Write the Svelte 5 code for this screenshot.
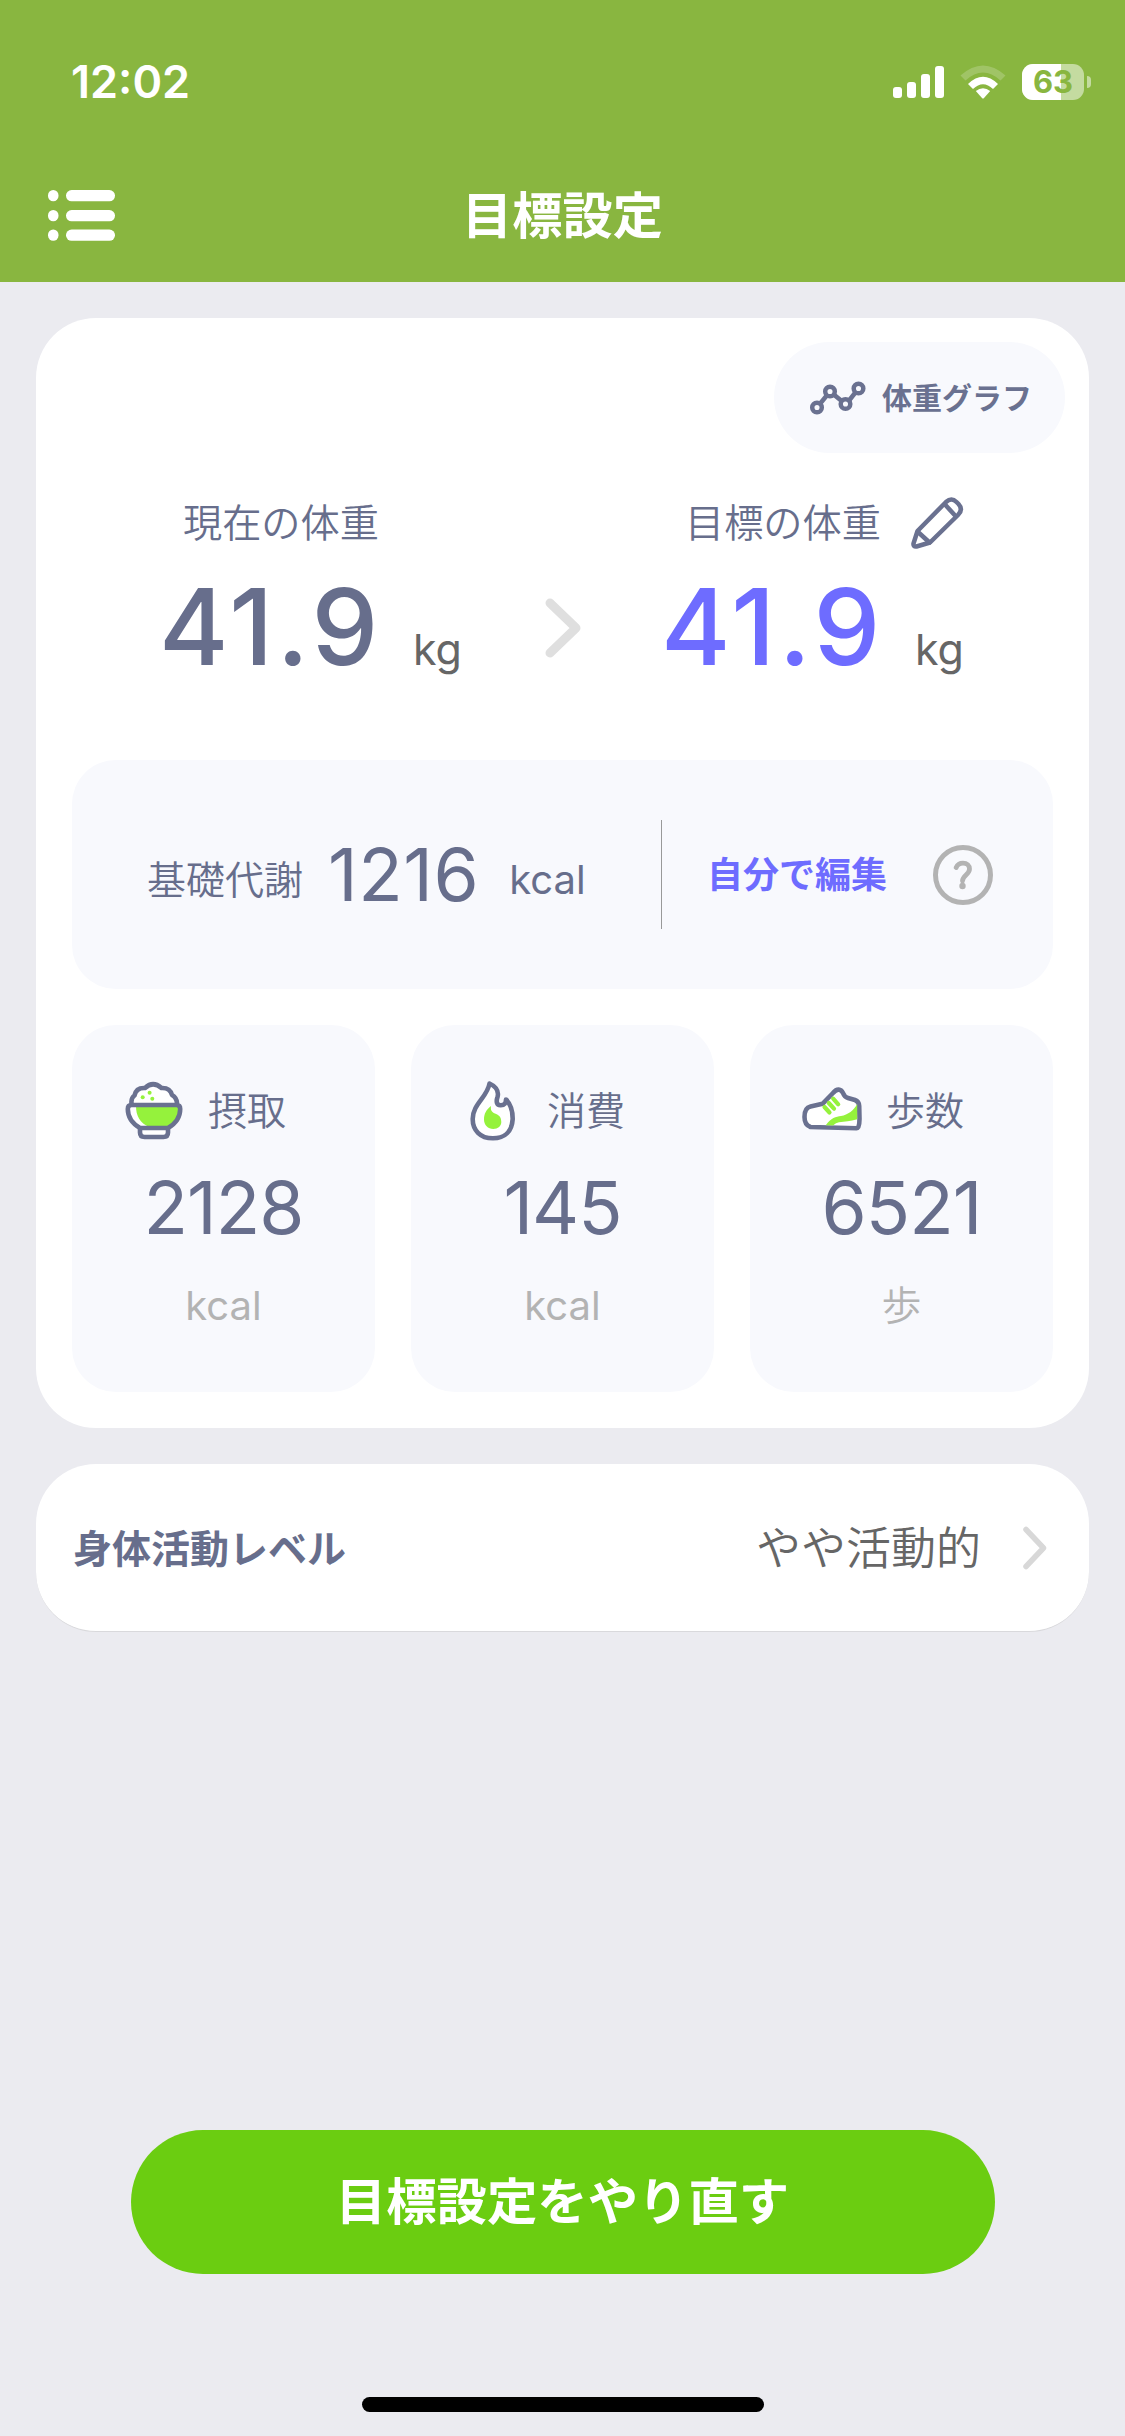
<script>
	const bars = [11, 16, 24, 32];
	const battery = 63;

	const weights = [
		{ label: '現在の体重', value: '41.9', editable: false },
		{ label: '目標の体重', value: '41.9', editable: true }
	];

	const stats = [
		{ icon: 'bowl', label: '摂取', value: 2128, unit: 'kcal' },
		{ icon: 'flame', label: '消費', value: 145, unit: 'kcal' },
		{ icon: 'shoe', label: '歩数', value: 6521, unit: '歩' }
	];
</script>

<div class="screen">
	<header>
		<div class="status">
			<span class="time">12:02</span>
			<div class="indicators">
				<div class="signal">
					{#each bars as height}
						<i style="height: {height}px"></i>
					{/each}
				</div>
				<svg class="wifi" width="46" height="34" viewBox="0 0 46 34">
					<path d="M0.5 10.5Q23-9.5 45.5 10.5L40.5 15.5Q23-0.5 5.5 15.5Z" fill="#fff" opacity="0.2" />
					<path d="M8 19Q23 4.500 38 19L33 24Q23 14.500 13 24Z" fill="#fff" />
					<path d="M15.800 26Q23 20.500 30.200 26L24 33Q23 34 22 33Z" fill="#fff" />
				</svg>
				<div class="battery">
					<div class="cell">
						<div class="level" style="width: {battery}%"></div>
						<span>{battery}</span>
					</div>
					<i class="nub"></i>
				</div>
			</div>
		</div>
		<div class="nav">
			<svg class="menu" width="67" height="52" viewBox="0 0 67 52" fill="#fff">
				{#each [0, 20, 39.500] as y}
					<rect x="0" {y} width="10.500" height="11.300" rx="5.200" />
					<rect x="18" {y} width="49" height="11.300" rx="5.600" />
				{/each}
			</svg>
			<h1>目標設定</h1>
		</div>
	</header>

	<main>
		<section class="card">
			<button class="graph">
				<svg width="58" height="36" viewBox="0 0 58 36" fill="none" stroke="#6a7190">
					<path d="M8 27.500L21 11.500L37 24.500L49.500 8.500" stroke-width="4.500" />
					<g stroke-width="4.500" fill="#f8f9fd">
						<circle cx="8" cy="27.500" r="4.800" />
						<circle cx="21" cy="11.500" r="4.800" />
						<circle cx="36.500" cy="24" r="4.800" />
						<circle cx="49.500" cy="8.500" r="4.800" />
					</g>
				</svg>
				体重グラフ
			</button>

			<div class="weights">
				{#each weights as weight, i}
					{#if i > 0}
						<svg class="arrow" width="36" height="60" viewBox="0 0 36 60">
							<path
								d="M5 5L31 30L5 55"
								fill="none"
								stroke="#dfdfdf"
								stroke-width="9"
								stroke-linecap="round"
								stroke-linejoin="round"
							/>
						</svg>
					{/if}
					<div class="weight" class:target={weight.editable}>
						<div class="weight-label">
							{weight.label}
							{#if weight.editable}
								<svg
									width="54"
									height="54"
									viewBox="0 0 54 54"
									fill="none"
									stroke="#6a7190"
									stroke-width="4.500"
									stroke-linecap="round"
									stroke-linejoin="round"
								>
									<path
										d="M7.500 35L36 6Q41.500 1 46.500 6L48.500 8Q53.500 13.500 48 19L20 46.500L6.500 50.500Q3 51 3.500 47.500Z"
									/>
									<path d="M35 8.500L45.500 20M8 36L19.500 46.500" />
								</svg>
							{/if}
						</div>
						<div class="weight-value">
							<strong>{weight.value}</strong>
							<span>kg</span>
						</div>
					</div>
				{/each}
			</div>

			<div class="metabolism">
				<div class="bmr">
					<span class="bmr-label">基礎代謝</span>
					<span class="number">1216</span>
					<span class="bmr-unit">kcal</span>
				</div>
				<div class="divider"></div>
				<button class="edit">自分で編集</button>
				<svg class="help" width="60" height="60" viewBox="0 0 60 60" fill="none" stroke="#b3b3b3">
					<circle cx="30" cy="30" r="27.500" stroke-width="5" />
					<path
						d="M23.200 22.500C24.500 19.500 27 18.200 30 18.200C34 18.200 36.500 20.500 36.500 24C36.500 29.500 29.500 30.500 29.500 36"
						stroke-width="4.800"
						stroke-linecap="round"
					/>
					<circle cx="29.500" cy="41" r="3.200" fill="#b3b3b3" stroke="none" />
				</svg>
			</div>

			<div class="stats">
				{#each stats as stat}
					<div class="stat">
						<div class="stat-head">
							<svg
								width="60"
								height="60"
								viewBox="0 0 60 60"
								fill="none"
								stroke="#6a7190"
								stroke-width="4.600"
								stroke-linecap="round"
								stroke-linejoin="round"
							>
								{#if stat.icon === 'bowl'}
									<path
										d="M7.500 22Q7 17 10.500 14.500Q12 6.500 21 7Q29-0.500 37.500 7Q46 6.500 48 14Q52.500 16.500 53 22"
										fill="#fff"
									/>
									<path d="M16 48V51.500Q16 56 20.500 56H39.500Q44 56 44 51.500V48" fill="#fff" />
									<path
										d="M3.800 28Q3.800 24 7.500 24H52.500Q56.200 24 56.200 28C56.200 37 50 43.500 44 47H16C10 43.500 3.800 37 3.800 28Z"
										fill="#fff"
										stroke="none"
									/>
									<path
										d="M12 25H56C57 36 50 43 44 46H25C16 42 12 35 12 25Z"
										fill="#95f23c"
										stroke="none"
									/>
									<path
										d="M3.800 28Q3.800 24 7.500 24H52.500Q56.200 24 56.200 28C56.200 37 50 43.500 44 47H16C10 43.500 3.800 37 3.800 28Z"
									/>
									<g fill="#95f23c" stroke="none">
										<circle cx="25.600" cy="11.800" r="2" />
										<circle cx="18.700" cy="16.300" r="2" />
										<circle cx="28.300" cy="17.700" r="2" />
									</g>
								{:else if stat.icon === 'flame'}
									<path
										d="M26.500 2.500C31 4.500 36.500 9 34.500 16C33 20.500 33.500 24 37.500 24.300C41.500 24.500 43 22 43 18.500C47.500 23 49.700 31 49.700 38C49 50 42 57.300 30 57.300C17 57.300 9.700 49 9.700 38C9.700 23 24.500 16 26.500 2.500Z"
										fill="#fff"
									/>
									<path
										d="M28 25C23 29 21 33 21 38.500C21 44 25 48 30.300 48C35 48 38.300 45 38.300 41C38.300 35 35 34 32 32.500C28.500 31 27.500 29 28 25Z"
										fill="#95f23c"
										stroke="none"
									/>
								{:else}
									<path
										d="M2.500 36C2.500 30 4.500 26.500 8.500 25.600L20.500 22.800L31 12C35 7 39 8 41 12Q42.500 16 46 17L53 19Q57 20.500 57.200 25L57.500 38Q57.500 47.200 54.500 47.200L8.500 46Q2.500 44 2.500 36Z"
										fill="#fff"
									/>
									<path
										d="M23.800 44.300C29 37 34 35.500 39 35C46 34 52 29 55.200 23V38.300C48 40.500 43 40.500 37 41.200Q34 41.500 31 44.500Z"
										fill="#95f23c"
										stroke="none"
									/>
									<path
										d="M22.500 26L27.500 31.500M26.800 22L32 27.700M31.200 17.700L36.200 23.300"
										stroke="#95f23c"
										stroke-width="4.200"
									/>
								{/if}
							</svg>
							{stat.label}
						</div>
						<div class="number">{stat.value}</div>
						<div class="stat-unit" class:latin={stat.unit === 'kcal'}>{stat.unit}</div>
					</div>
				{/each}
			</div>
		</section>

		<section class="activity">
			<h2>身体活動レベル</h2>
			<span>やや活動的</span>
			<svg width="24" height="44" viewBox="0 0 24 44">
				<path
					d="M3 3.500L20.500 22L3 40.500"
					fill="none"
					stroke="#d8d8d8"
					stroke-width="5.500"
					stroke-linecap="round"
					stroke-linejoin="round"
				/>
			</svg>
		</section>
	</main>

	<footer>
		<button class="reset">目標設定をやり直す</button>
		<div class="home"></div>
	</footer>
</div>

<style>
	:global(body) {
		margin: 0;
		background: #ebebf0;
	}

	.screen {
		display: flex;
		flex-direction: column;
		width: 1125px;
		height: 2436px;
		box-sizing: border-box;
		background: #ebebf0;
		color: #676e8c;
		font-family: Inter, 'Noto Sans CJK JP', sans-serif;
		font-size: 39px;
		font-weight: 350;
		line-height: 1.2;
	}

	h1,
	h2 {
		margin: 0;
	}

	button {
		padding: 0;
		border: 0;
		font: inherit;
		color: inherit;
	}

	header {
		height: 282px;
		background: #89b640;
		color: #fff;
	}

	.status {
		display: flex;
		align-items: center;
		justify-content: space-between;
		box-sizing: border-box;
		height: 150px;
		padding: 14px 34px 0 71px;
	}

	.time {
		font-size: 45px;
		font-weight: 600;
	}

	.indicators {
		display: flex;
		align-items: center;
		gap: 16px;
	}

	.signal {
		display: flex;
		align-items: flex-end;
		gap: 5px;
	}

	.signal i {
		width: 9px;
		border-radius: 3px;
		background: #fff;
	}

	.battery {
		display: flex;
		align-items: center;
		gap: 3px;
	}

	.cell {
		display: grid;
		width: 62px;
		height: 36px;
		overflow: hidden;
		border-radius: 11px;
		background: rgba(255, 255, 255, 0.5);
	}

	.level,
	.cell span {
		grid-area: 1 / 1;
	}

	.level {
		background: #fff;
	}

	.cell span {
		color: #89b640;
		font-size: 31px;
		font-weight: 700;
		line-height: 36px;
		text-align: center;
	}

	.nub {
		width: 4px;
		height: 12px;
		border-radius: 0 4px 4px 0;
		background: rgba(255, 255, 255, 0.5);
	}

	.nav {
		display: grid;
		grid-template-columns: 1fr auto 1fr;
		align-items: center;
		height: 132px;
		padding: 0 48px;
	}

	h1 {
		font-size: 50.2px;
		font-weight: 700;
		line-height: 60px;
	}

	main {
		display: flex;
		flex-direction: column;
		flex: 1;
		gap: 36px;
		padding: 36px;
	}

	.card {
		display: flex;
		flex-direction: column;
		box-sizing: border-box;
		height: 1110px;
		padding: 24px 36px 36px;
		border-radius: 60px;
		background: #fff;
	}

	.graph {
		display: flex;
		align-items: center;
		align-self: flex-end;
		gap: 15px;
		box-sizing: border-box;
		width: 291px;
		height: 111px;
		margin-right: -12px;
		padding-left: 35px;
		border-radius: 56px;
		background: #f8f9fd;
		color: #6a7190;
		font-size: 30px;
		font-weight: 700;
	}

	.weights {
		display: flex;
		flex: none;
		height: 221px;
		margin: 43px 0;
		padding-left: 90px;
	}

	.weight {
		width: 382px;
	}

	.weight-label {
		display: flex;
		align-items: center;
		gap: 29px;
		height: 54px;
		padding-left: 21px;
		font-size: 39.2px;
	}

	.weight-value {
		display: flex;
		align-items: baseline;
		justify-content: space-between;
		width: 300px;
		margin-top: 20px;
		line-height: 114px;
	}

	.weight-value strong {
		margin-left: -3px;
		font-size: 106px;
		font-weight: 550;
		letter-spacing: 3.5px;
	}

	.weight-value span {
		color: #666;
		font-size: 43px;
		font-weight: 400;
	}

	.target strong {
		color: #6e6cff;
	}

	.arrow {
		margin: 102px 83px 0 1px;
	}

	.metabolism {
		display: flex;
		align-items: center;
		flex: none;
		box-sizing: border-box;
		height: 229px;
		padding: 0 60px 0 75px;
		border-radius: 44px;
		background: #f8f9fd;
	}

	.bmr {
		display: flex;
		align-items: center;
		width: 514px;
	}

	.bmr .number {
		letter-spacing: 0.5px;
	}

	.bmr-unit {
		margin-left: 30px;
		padding-top: 10px;
		font-size: 40px;
		font-weight: 400;
	}

	.bmr-label {
		margin-right: 25px;
		padding-top: 11px;
	}

	.number {
		font-size: 73px;
		font-weight: 400;
		line-height: 80px;
	}

	.divider {
		width: 1px;
		height: 109px;
		background: #999;
	}

	.edit {
		margin: 0 auto 0 45px;
		padding-top: 2px;
		background: none;
		color: #6e6cff;
		font-size: 36px;
		font-weight: 700;
	}

	.stats {
		display: grid;
		grid-template-columns: repeat(3, 1fr);
		flex: 1;
		gap: 36px;
		margin-top: 36px;
	}

	.stat {
		padding-top: 56px;
		border-radius: 44px;
		background: #f8f9fd;
		text-align: center;
	}

	.stat .number {
		letter-spacing: -1px;
	}

	.stat-head {
		display: flex;
		align-items: center;
		gap: 24px;
		height: 60px;
		margin-bottom: 27px;
		padding-left: 52px;
	}

	.stat-unit {
		margin-top: 33px;
		color: #b3b3b3;
		font-size: 40px;
		line-height: 50px;
	}

	.latin {
		font-weight: 400;
	}

	.activity {
		display: flex;
		align-items: center;
		box-sizing: border-box;
		height: 168px;
		padding: 0 42px 0 37px;
		border-bottom: 1px solid #d9d9dc;
		border-radius: 60px;
		background: #fff;
	}

	h2 {
		flex: 1;
		padding-top: 3px;
		font-size: 39px;
		font-weight: 700;
	}

	.activity span {
		margin-right: 42px;
		padding-top: 3px;
		color: #666;
		font-size: 45px;
	}

	footer {
		display: flex;
		flex-direction: column;
		align-items: center;
		justify-content: space-between;
		height: 282px;
		padding-bottom: 24px;
	}

	.reset {
		width: 864px;
		height: 144px;
		border-radius: 72px;
		background: #6bcd11;
		color: #fff;
		font-size: 50.4px;
		font-weight: 700;
	}

	.home {
		width: 402px;
		height: 15px;
		border-radius: 8px;
		background: #000;
	}
</style>
